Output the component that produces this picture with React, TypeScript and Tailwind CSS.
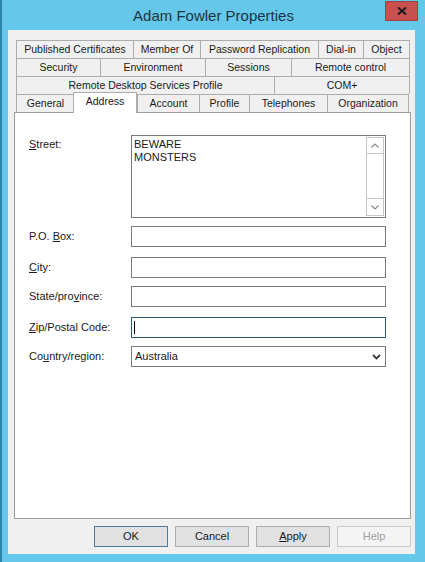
import React from "react";

type TabDef = { label: React.ReactNode; w: string; last?: boolean };

const row1: TabDef[] = [
  { label: "Published Certificates", w: "w-[117px]" },
  { label: "Member Of", w: "w-[67px]" },
  { label: "Password Replication", w: "w-[118px]" },
  { label: "Dial-in", w: "w-[45px]" },
  { label: "Object", w: "w-[47px]", last: true },
];
const row2: TabDef[] = [
  { label: "Security", w: "w-[84px]" },
  { label: "Environment", w: "w-[105px]" },
  { label: "Sessions", w: "w-[86px]" },
  { label: "Remote control", w: "w-[119px]", last: true },
];
const row3: TabDef[] = [
  { label: "Remote Desktop Services Profile", w: "w-[258px]" },
  { label: "COM+", w: "w-[136px]", last: true },
];

function Tab({ label, w, last }: TabDef) {
  return (
    <div
      className={`${w} ${last ? "border-r" : ""} h-full flex items-center justify-center border-t border-l border-[#acacac] bg-[#f0f0f0] whitespace-nowrap`}
    >
      {label}
    </div>
  );
}

function TabRow({ tabs }: { tabs: TabDef[] }) {
  return (
    <div className="flex h-[18px]">
      {tabs.map((t, i) => (
        <Tab key={i} {...t} />
      ))}
    </div>
  );
}

function Chevron({ up, color }: { up?: boolean; color: string }) {
  return (
    <svg width="8" height="5" viewBox="0 0 8 5">
      <polyline
        points={up ? "0.5,4.5 4,1 7.5,4.5" : "0.5,0.5 4,4 7.5,0.5"}
        fill="none"
        stroke={color}
        strokeWidth="1.2"
      />
    </svg>
  );
}

function Field({ children }: { children?: React.ReactNode }) {
  return (
    <div className="flex items-center w-[255px] h-[21px] border border-[#7a7a7a] bg-white">
      {children}
    </div>
  );
}

function Row({
  label,
  children,
  className,
}: {
  label: React.ReactNode;
  children: React.ReactNode;
  className?: string;
}) {
  return (
    <div className={`flex items-center ${className ?? ""}`}>
      <div className="w-[102px] whitespace-nowrap">{label}</div>
      {children}
    </div>
  );
}

export default function App() {
  return (
    <div className="w-[425px] h-[562px] bg-[#65c8ea] border-l-2 border-[#2b88aa] flex flex-col font-['Liberation_Sans',Arial,sans-serif] text-[11px] leading-[13px] text-[#1a1a1a]">
      {/* title bar */}
      <div className="grid grid-cols-[1fr_auto_1fr] h-[30px]">
        <div />
        <div className="self-center text-[15px] leading-[18px] text-[#1d3442] pt-[1px]">
          Adam Fowler Properties
        </div>
        <div className="flex justify-end items-start">
          <div className="mt-[1px] mr-[7px] w-[33px] h-[20px] bg-[#c75050] border border-[#a54040] flex items-center justify-center">
            <svg width="10" height="8" viewBox="0 0 10 8">
              <path d="M1 0.5 L9 7.5 M9 0.5 L1 7.5" stroke="#1b1b1b" strokeWidth="2" />
            </svg>
          </div>
        </div>
      </div>

      {/* client area */}
      <div className="ml-[6px] w-[407px] h-[524px] bg-[#f0f0f0] flex flex-col pt-[10px] pl-[6px]">
        <div className="ml-[2px] flex flex-col text-[10.5px]">
          <TabRow tabs={row1} />
          <TabRow tabs={row2} />
          <TabRow tabs={row3} />
          <div className="flex h-[18px]">
            <Tab label="General" w="w-[58px]" />
            <div className="relative z-10 -ml-px w-[64px] h-[21px] -mt-[2px] flex items-center justify-center pb-[3px] border-t border-l border-r border-[#acacac] bg-white">
              Address
            </div>
            <Tab label="Account" w="w-[62px]" />
            <Tab label="Profile" w="w-[50px]" />
            <Tab label="Telephones" w="w-[78px]" />
            <Tab label="Organization" w="w-[82px]" last />
          </div>
        </div>

        {/* panel */}
        <div className="w-[397px] h-[407px] border border-[#9c9c9c] bg-white pt-[22px] pl-[14px]">
          <div className="flex items-start">
            <div className="w-[102px] pt-[3px]">
              <u>S</u>treet:
            </div>
            <div className="flex w-[255px] h-[83px] border border-[#7a7a7a] bg-white">
              <div className="flex-1 pl-[2px] pt-[2px] leading-[13px]">
                <div>BEWARE</div>
                <div>MONSTERS</div>
              </div>
              <div className="my-[1px] mr-[1px] w-[18px] border border-[#c6c6c6] flex flex-col">
                <div className="h-[16px] border-b border-[#c6c6c6] flex items-center justify-center">
                  <Chevron up color="#8a8a8a" />
                </div>
                <div className="flex-1" />
                <div className="h-[17px] border-t border-[#c6c6c6] flex items-center justify-center">
                  <Chevron color="#8a8a8a" />
                </div>
              </div>
            </div>
          </div>

          <Row className="mt-[8px]" label={<>P.O. <u>B</u>ox:</>}>
            <Field />
          </Row>
          <Row className="mt-[10px]" label={<><u>C</u>ity:</>}>
            <Field />
          </Row>
          <Row className="mt-[8px]" label={<>State/pro<u>v</u>ince:</>}>
            <Field />
          </Row>
          <Row className="mt-[10px]" label={<><u>Z</u>ip/Postal Code:</>}>
            <div className="flex items-center w-[255px] h-[21px] border border-[#2a5a72] bg-white">
              <div className="ml-[2px] w-px h-[13px] bg-black" />
            </div>
          </Row>
          <Row className="mt-[8px]" label={<>Co<u>u</u>ntry/region:</>}>
            <div className="flex items-center justify-between w-[255px] h-[21px] border border-[#7a7a7a] bg-white pl-[3px] pr-[4px]">
              <span>Australia</span>
              <svg width="9" height="6" viewBox="0 0 9 6">
                <polyline points="1,1 4.5,4.5 8,1" fill="none" stroke="#3a3a3a" strokeWidth="1.8" />
              </svg>
            </div>
          </Row>
        </div>

        {/* buttons */}
        <div className="flex justify-end gap-[7px] mt-[7px] pr-[4px]">
          <div className="w-[74px] h-[21px] border border-[#4a7b9d] bg-[#e1e1e1] flex items-center justify-center">
            OK
          </div>
          <div className="w-[74px] h-[21px] border border-[#adadad] bg-[#e1e1e1] flex items-center justify-center">
            Cancel
          </div>
          <div className="w-[74px] h-[21px] border border-[#adadad] bg-[#e1e1e1] flex items-center justify-center">
            <span>
              <u>A</u>pply
            </span>
          </div>
          <div className="w-[74px] h-[21px] border border-[#c8c8c8] bg-[#f4f4f4] text-[#a0a0a0] flex items-center justify-center">
            Help
          </div>
        </div>
      </div>
    </div>
  );
}
